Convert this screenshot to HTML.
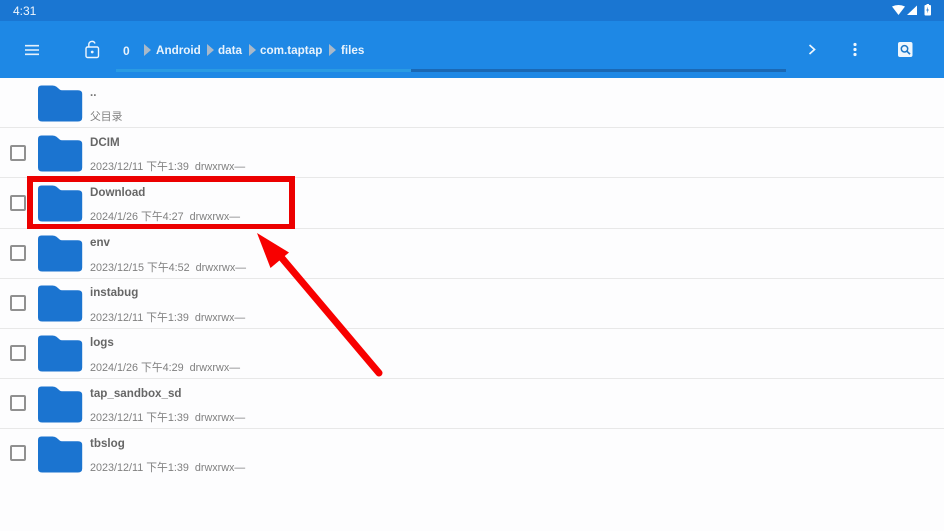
<!DOCTYPE html>
<html><head><meta charset="utf-8"><style>
html,body{margin:0;padding:0}
body{width:944px;height:531px;overflow:hidden;position:relative;background:#fdfdfe;font-family:"Liberation Sans","Noto Sans CJK SC",sans-serif}
.a{position:absolute;white-space:nowrap}
.st{left:0;top:0;width:944px;height:21px;background:#1a76d2}
.tb{left:0;top:21px;width:944px;height:57px;background:#1e88e5}
.crumb{top:44px;font-size:11.7px;font-weight:bold;color:#e9f3fc;line-height:14px}
.tri{width:0;height:0;top:44px;border-left:7px solid #a9b9c9;border-top:6px solid transparent;border-bottom:6px solid transparent}
.sep{left:0;width:944px;height:1px;background:#e8e8e8}
.name{left:90px;font-size:11.6px;font-weight:bold;color:#666;line-height:14px}
.meta{left:90px;font-size:10.8px;color:#808080;line-height:14px}
.cb{left:10px;width:12px;height:12px;border:2px solid #909090;border-radius:2px}
svg.f{position:absolute;left:38px;width:45px;height:37px}
</style></head><body>
<div class="a st"></div>
<div class="a" style="left:13px;top:4px;font-size:12px;color:#f0f6fc;line-height:14px">4:31</div>
<svg class="a" style="left:890px;top:3px" width="54" height="14" viewBox="0 0 54 14">
<path d="M2 3.500 Q8.500 0.500 15 3.500 L8.500 12 Z" fill="#fff"/><path d="M27 2.500 V12 H17 Z" fill="#fff"/>
<rect x="34.500" y="2" width="6.500" height="10.500" rx="1" fill="#fff"/><rect x="36.500" y="1" width="2.500" height="1" fill="#fff"/><path d="M38 3.500 L36.300 7.500 H37.500 L37 10.500 L38.800 6.500 H37.600 Z" fill="#1a76d2"/>
</svg>
<div class="a tb"></div>
<svg class="a" style="left:25px;top:44px" width="15" height="12"><path d="M0 1.700H14M0 6H14M0 10.300H14" stroke="#e6f1fb" stroke-width="1.600"/></svg>
<svg class="a" style="left:84px;top:40px" width="16" height="19" viewBox="0 0 16 19"><rect x="2" y="7" width="12.500" height="10.500" rx="1.500" fill="none" stroke="#eef6fd" stroke-width="1.400"/><path d="M4.800 7V4.300A3.200 3.200 0 0 1 11 3.500" fill="none" stroke="#eef6fd" stroke-width="1.400"/><circle cx="8.200" cy="12" r="1.400" fill="#eef6fd"/></svg>
<div class="a crumb" style="left:123px;font-size:12px">0</div>
<div class="a tri" style="left:144px"></div>
<div class="a crumb" style="left:156px">Android</div>
<div class="a tri" style="left:207px"></div>
<div class="a crumb" style="left:218px">data</div>
<div class="a tri" style="left:249px"></div>
<div class="a crumb" style="left:260px">com.taptap</div>
<div class="a tri" style="left:329px"></div>
<div class="a crumb" style="left:341px">files</div>
<div class="a" style="left:116px;top:69px;width:295px;height:3px;background:#2a9be3"></div>
<div class="a" style="left:411px;top:69px;width:375px;height:3px;background:#1a68b4"></div>
<svg class="a" style="left:807px;top:43px" width="10" height="13"><path d="M2.500 2L7.500 6.500L2.500 11" fill="none" stroke="#eef6fd" stroke-width="1.700"/></svg>
<svg class="a" style="left:852px;top:42px" width="6" height="15"><circle cx="3" cy="2.500" r="1.600" fill="#eef6fd"/><circle cx="3" cy="7.500" r="1.600" fill="#eef6fd"/><circle cx="3" cy="12.500" r="1.600" fill="#eef6fd"/></svg>
<svg class="a" style="left:898px;top:42px" width="16" height="16"><rect width="14.500" height="15" rx="2" fill="#eef6fd"/><circle cx="6.500" cy="6.800" r="3.200" fill="none" stroke="#1e78c8" stroke-width="1.500"/><path d="M9 9.300L12 12.200" stroke="#1e78c8" stroke-width="1.700"/></svg>

<svg width="0" height="0" style="position:absolute"><defs><symbol id="fd" viewBox="0 0 45 37"><path d="M3.500 0.500H14.500Q17 0.500 18.500 1.800L22 4.800Q22.800 5.300 24 5.300H40Q44.200 5.300 44.200 9V32.500Q44.200 36.500 40 36.500H4Q0 36.500 0 32.500V4Q0 0.500 3.500 0.500Z" fill="#1b74d0"/></symbol></defs></svg>

<svg class="f" style="top:84.500px"><use href="#fd"/></svg>
<div class="a name" style="top:86px;color:#777">..</div>
<div class="a meta" style="top:110px">父目录</div>
<div class="a sep" style="top:127px"></div>

<div class="a cb" style="top:145px"></div>
<svg class="f" style="top:134.500px"><use href="#fd"/></svg>
<div class="a name" style="top:136px">DCIM</div>
<div class="a meta" style="top:160px">2023/12/11 下午1:39&nbsp;&nbsp;drwxrwx—</div>
<div class="a sep" style="top:177px"></div>

<div class="a cb" style="top:195px"></div>
<svg class="f" style="top:184.500px"><use href="#fd"/></svg>
<div class="a name" style="top:186px">Download</div>
<div class="a meta" style="top:210px">2024/1/26 下午4:27&nbsp;&nbsp;drwxrwx—</div>
<div class="a sep" style="top:228px"></div>

<div class="a cb" style="top:245px"></div>
<svg class="f" style="top:235px"><use href="#fd"/></svg>
<div class="a name" style="top:236px">env</div>
<div class="a meta" style="top:261px">2023/12/15 下午4:52&nbsp;&nbsp;drwxrwx—</div>
<div class="a sep" style="top:278px"></div>

<div class="a cb" style="top:295px"></div>
<svg class="f" style="top:285px"><use href="#fd"/></svg>
<div class="a name" style="top:286px">instabug</div>
<div class="a meta" style="top:311px">2023/12/11 下午1:39&nbsp;&nbsp;drwxrwx—</div>
<div class="a sep" style="top:328px"></div>

<div class="a cb" style="top:345px"></div>
<svg class="f" style="top:335px"><use href="#fd"/></svg>
<div class="a name" style="top:336px">logs</div>
<div class="a meta" style="top:361px">2024/1/26 下午4:29&nbsp;&nbsp;drwxrwx—</div>
<div class="a sep" style="top:378px"></div>

<div class="a cb" style="top:395px"></div>
<svg class="f" style="top:385.500px"><use href="#fd"/></svg>
<div class="a name" style="top:387px">tap_sandbox_sd</div>
<div class="a meta" style="top:411px">2023/12/11 下午1:39&nbsp;&nbsp;drwxrwx—</div>
<div class="a sep" style="top:428px"></div>

<div class="a cb" style="top:445px"></div>
<svg class="f" style="top:435.500px"><use href="#fd"/></svg>
<div class="a name" style="top:437px">tbslog</div>
<div class="a meta" style="top:461px">2023/12/11 下午1:39&nbsp;&nbsp;drwxrwx—</div>

<div class="a" style="left:27px;top:176px;width:256px;height:42px;border:6px solid #ec0000;border-bottom-width:5px"></div>
<svg class="a" style="left:250px;top:228px" width="140" height="155" viewBox="0 0 140 155">
<path d="M31 29L129 145" stroke="#f80000" stroke-width="7" stroke-linecap="round"/>
<path d="M7 5L39 24.500L20.500 40Z" fill="#f80000"/>
</svg>
</body></html>
